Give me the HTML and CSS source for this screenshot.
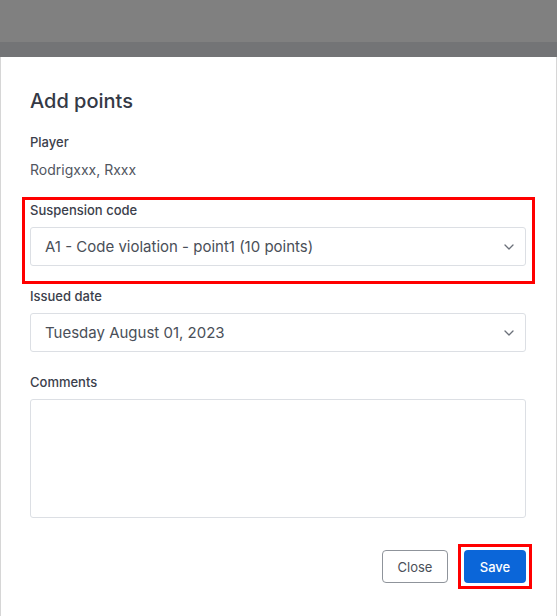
FILE: index.html
```html
<!DOCTYPE html>
<html lang="en">
  <head>
    <meta charset="UTF-8" />
    <meta name="viewport" content="width=device-width, initial-scale=1.0" />
    <title>Add points</title>
    <link rel="stylesheet" href="styles.css">
  </head>
  <body>
    <div class="backdrop">
      <div class="backdrop-band"></div>
    </div>
    <div class="modal">
      <h2 class="modal-title">Add points</h2>
      <form class="form">
        <div class="field">
          <label class="label">Player</label>
          <p class="value">Rodrigxxx, Rxxx</p>
        </div>
        <div class="field highlight">
          <label class="label" for="code">Suspension code</label>
          <div class="select" id="code">
            <span>A1 - Code violation - point1 (10 points)</span>
            <svg class="chevron" width="10" height="6" viewBox="0 0 10 6"><path d="M1 1l4 4 4-4" fill="none" stroke="#6b7079" stroke-width="1.3" stroke-linecap="round" stroke-linejoin="round"/></svg>
          </div>
        </div>
        <div class="field">
          <label class="label" for="date">Issued date</label>
          <div class="select" id="date">
            <span>Tuesday August 01, 2023</span>
            <svg class="chevron" width="10" height="6" viewBox="0 0 10 6"><path d="M1 1l4 4 4-4" fill="none" stroke="#6b7079" stroke-width="1.3" stroke-linecap="round" stroke-linejoin="round"/></svg>
          </div>
        </div>
        <div class="field">
          <label class="label" for="comments">Comments</label>
          <textarea class="textarea" id="comments"></textarea>
        </div>
        <div class="actions">
          <button type="button" class="btn btn-close">Close</button>
          <button type="submit" class="btn btn-save">Save</button>
        </div>
      </form>
    </div>
  </body>
</html>
```

FILE: styles.css
```css
html,
body {
  margin: 0;
  height: 100%;
  overflow: hidden;
}
body {
  font-family: Inter, "Noto Sans", sans-serif;
  background-color: #808080;
}
.backdrop {
  height: 57px;
  display: flex;
  flex-direction: column;
  justify-content: flex-end;
}
.backdrop-band {
  height: 15px;
  background-color: #737476;
}
.modal {
  background-color: white;
  padding: 30px 30px 30px 29px;
  border-left: 1px solid #d6d6d6;
  border-right: 1px solid #d6d6d6;
  box-sizing: border-box;
  min-height: 560px;
}
.modal-title {
  margin: 0 0 18px;
  font-size: 20px;
  line-height: 28px;
  font-weight: 500;
  color: #343945;
}
.form {
  display: flex;
  flex-direction: column;
}
.field {
  display: flex;
  flex-direction: column;
  margin-bottom: 21px;
}
.highlight {
  position: relative;
}
/* red annotation boxes drawn over the content */
.highlight::after,
.btn-save::after {
  content: "";
  position: absolute;
  border: 3px solid #ff0000;
  pointer-events: none;
}
.highlight::after {
  top: -4px;
  left: -8px;
  right: -9px;
  bottom: -18px;
}
.label {
  font-size: 13px;
  line-height: 18px;
  font-weight: 500;
  color: #3b404b;
  margin-bottom: 8px;
}
.value {
  margin: 1px 0 0;
  font-size: 14px;
  line-height: 20px;
  color: #51565f;
}
.select {
  height: 39px;
  box-sizing: border-box;
  border: 1px solid #dcdfe4;
  border-radius: 3px;
  display: flex;
  align-items: center;
  justify-content: space-between;
  padding: 0 11px 0 14px;
  font-size: 15px;
  color: #4a4f58;
}
.chevron {
  flex-shrink: 0;
}
.textarea {
  height: 119px;
  box-sizing: border-box;
  border: 1px solid #dcdfe4;
  border-radius: 3px;
  resize: none;
  font-family: inherit;
  outline: none;
}
.actions {
  display: flex;
  justify-content: flex-end;
  gap: 16px;
  margin-top: 11px;
}
.btn {
  height: 33px;
  border-radius: 4px;
  font-family: inherit;
  font-size: 13px;
  cursor: pointer;
}
.btn-close {
  width: 66px;
  background: white;
  border: 1px solid #8f949b;
  color: #4a4f58;
}
.btn-save {
  position: relative;
  width: 62px;
  background-color: #0b66d9;
  border: none;
  color: white;
  font-weight: 500;
}
.btn-save::after {
  top: -6px;
  left: -6px;
  right: -6px;
  bottom: -6px;
}
```
